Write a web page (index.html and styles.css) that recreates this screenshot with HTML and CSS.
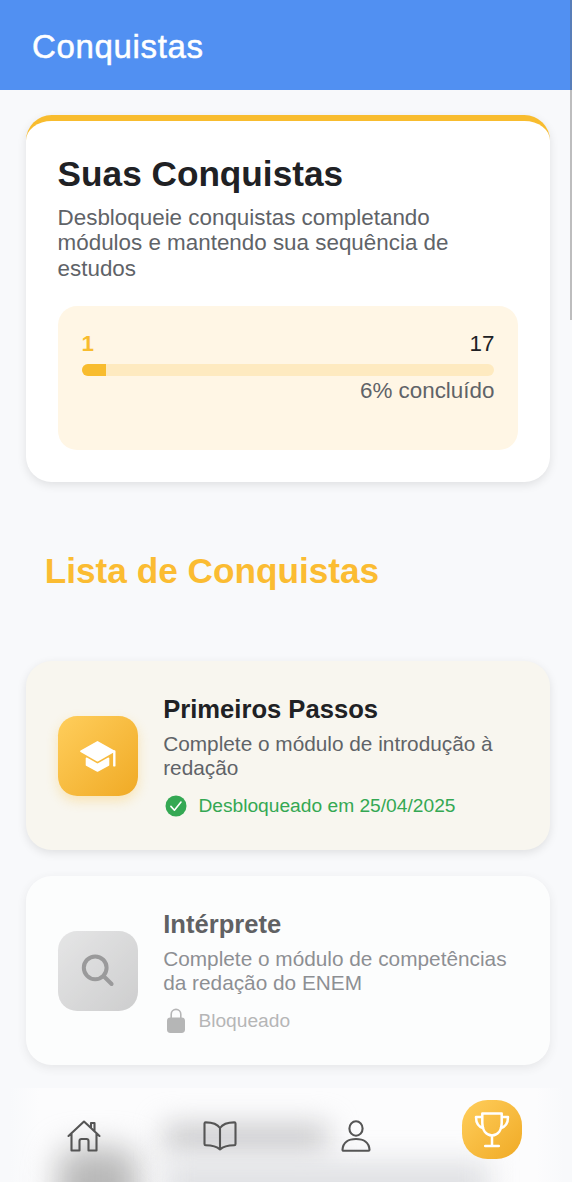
FILE: index.html
```html
<!DOCTYPE html>
<html lang="pt-BR">
<head>
    <meta charset="UTF-8">
    <meta name="viewport" content="width=device-width, initial-scale=1.0">
    <title>Conquistas</title>
    <link rel="stylesheet" href="styles.css">
</head>
<body>
    <header class="header">
        <h1>Conquistas</h1>
    </header>

    <main class="content">
        <section class="summary">
            <h2>Suas Conquistas</h2>
            <p class="summary-text">Desbloqueie conquistas completando módulos e mantendo sua sequência de estudos</p>
            <div class="progress-box">
                <div class="progress-numbers">
                    <span class="current">1</span>
                    <span>17</span>
                </div>
                <div class="progress-bar">
                    <div class="progress-fill" style="width: 5.88%"></div>
                </div>
                <div class="progress-label">6% concluído</div>
            </div>
        </section>

        <h2 class="list-title">Lista de Conquistas</h2>

        <div class="list">
            <article class="card unlocked">
                <div class="card-icon">
                    <svg width="38" height="38" viewBox="0 0 38 38" fill="#fff" stroke="#fff" stroke-linejoin="round" stroke-linecap="round">
                        <path d="M2 14.2 18.5 5 35 14.2 18.5 23.6Z" stroke-width="1.8"/>
                        <path d="M7.5 21.3 18.5 27.5 29.5 21.3V28L18.5 34 7.5 28Z" stroke-width="1.6"/>
                        <path d="M35.3 14.5V28.4" fill="none" stroke-width="2.4"/>
                    </svg>
                </div>
                <div class="card-info">
                    <h3>Primeiros Passos</h3>
                    <p>Complete o módulo de introdução à redação</p>
                    <div class="status">
                        <svg width="26" height="26" viewBox="0 0 26 26">
                            <circle cx="13" cy="13" r="10.5" fill="#34a853"/>
                            <path d="m7.9 13.4 3.5 3.8L18 9" fill="none" stroke="#fff" stroke-width="1.6" stroke-linecap="round" stroke-linejoin="round"/>
                        </svg>
                        <span>Desbloqueado em 25/04/2025</span>
                    </div>
                </div>
            </article>

            <article class="card locked">
                <div class="card-icon">
                    <svg width="38" height="38" viewBox="0 0 38 38" fill="none" stroke="#737373" stroke-width="4" stroke-linecap="round">
                        <circle cx="16.2" cy="15.8" r="11.4"/>
                        <path d="m25 24.5 7.6 7.5"/>
                    </svg>
                </div>
                <div class="card-info">
                    <h3>Intérprete</h3>
                    <p>Complete o módulo de competências da redação do ENEM</p>
                    <div class="status">
                        <svg width="26" height="26" viewBox="0 0 26 26">
                            <rect x="4" y="9.5" width="18" height="15.5" rx="3.4" fill="#9a9a9a"/>
                            <path d="M8.2 10V6.2a4.8 4.8 0 0 1 9.6 0V10" fill="none" stroke="#9a9a9a" stroke-width="1.6"/>
                        </svg>
                        <span>Bloqueado</span>
                    </div>
                </div>
            </article>
        </div>
    </main>

    <nav class="bottom-nav">
        <!-- blurred card passing behind the menu -->
        <div class="nav-blur">
            <div class="blur-icon"></div>
            <div class="blur-text">
                <div class="blur-title"></div>
                <div class="blur-line"></div>
            </div>
        </div>
        <a href="#" class="nav-item">
            <svg width="36" height="36" viewBox="0 0 36 36">
                <path d="M2.5 18 18 3.5l15.5 14.5M5.500 15.500v17h8V23c0-1.200.8-2 2-2h5c1.200 0 2 .8 2 2v9.500h8v-17M25 10V5h3.500v8"/>
            </svg>
        </a>
        <a href="#" class="nav-item">
            <svg width="36" height="36" viewBox="0 0 36 36">
                <path d="M18 10C15.500 6.300 9.500 4.400 3.700 4.400q-1.200 0-1.200 1.200v20.400q0 1.200 1.200 1.200c6 0 10.800.8 14.300 4.300 3.500-3.500 8.300-4.300 14.300-4.300q1.200 0 1.200-1.200V5.600q0-1.200-1.200-1.200C26.500 4.400 20.500 6.300 18 10V31.500"/>
            </svg>
        </a>
        <a href="#" class="nav-item">
            <svg width="36" height="36" viewBox="0 0 36 36">
                <ellipse cx="18" cy="10.5" rx="6.6" ry="7.2"/>
                <path d="M4.500 31.700C5 24.500 10.500 21 18 21s13 3.500 13.500 10.700q0 1-1 1H5.500q-1 0-1-1Z"/>
            </svg>
        </a>
        <a href="#" class="nav-item active">
            <svg width="38" height="38" viewBox="0 0 38 38">
                <path d="M9.300 2.500h19.400v9.500c0 7-3.500 12-9.700 12.500C12.800 24 9.300 19 9.300 12ZM19 24.500V35M12.200 35h13.600M9.300 6H3c0 5.500 2.200 9.700 7.300 11.200M28.700 6H35c0 5.500-2.200 9.700-7.300 11.200"/>
            </svg>
        </a>
    </nav>

    <div class="scroll-thumb"></div>
</body>
</html>
```

FILE: styles.css
```css
* {
    box-sizing: border-box;
}

body {
    margin: 0;
    height: 1182px;
    background-color: #f8f9fb;
    color: #202124;
    font-family: "Liberation Sans", Arial, sans-serif;
    font-size: 22.4px;
    line-height: 25.6px;
}

h1, h2, h3, p {
    margin: 0;
}

.header {
    height: 89.6px;
    padding: 0 32px;
    display: flex;
    align-items: center;
    background-color: #5190f2;
    color: #fff;
}

.header h1 {
    font-size: 33px;
    font-weight: normal;
    letter-spacing: 0.65px;
    line-height: 38px;
    margin-top: 4px;
    -webkit-text-stroke: 0.5px #fff;
}

.content {
    padding: 25.9px 21.6px 0 25.6px;
}

.summary {
    height: 366.9px;
    padding: 32px;
    border-top: 6.4px solid #f8bc2e;
    border-radius: 25.6px;
    background-color: #fff;
    box-shadow: 0 3px 10px rgba(0, 0, 0, 0.1);
}

.summary h2 {
    font-size: 35.2px;
    line-height: 41px;
}

.summary-text {
    margin-top: 10.4px;
    color: #5f6368;
}

.progress-box {
    height: 144px;
    margin-top: 24.4px;
    padding: 24px;
    border-radius: 19.2px;
    background-color: #fff6e5;
}

.progress-numbers {
    display: flex;
    justify-content: space-between;
    margin-top: 0.6px;
}

.current {
    color: #f8bc2e;
    font-weight: bold;
}

.progress-bar {
    height: 12.8px;
    margin-top: 7.4px;
    border-radius: 6.4px;
    background-color: #feeac0;
    overflow: hidden;
}

.progress-fill {
    height: 100%;
    background-color: #f8bc2e;
}

.progress-label {
    margin-top: 1.8px;
    text-align: right;
    color: #5f6368;
}

.list-title {
    padding-left: 19.2px;
    margin: 67.6px 0 70.2px;
    color: #fbbc32;
    font-size: 35.2px;
    line-height: 41px;
}

.list {
    display: flex;
    flex-direction: column;
    gap: 25.6px;
}

.card {
    display: flex;
    align-items: center;
    gap: 25.6px;
    height: 189.2px;
    padding: 32px;
    border-radius: 25.6px;
    background-color: #fff;
    box-shadow: 0 3px 10px rgba(0, 0, 0, 0.1);
}

.card.unlocked {
    background-color: #f8f6ef;
}

.card.locked {
    opacity: 0.7;
}

.card-icon {
    width: 80px;
    height: 80px;
    flex-shrink: 0;
    display: flex;
    align-items: center;
    justify-content: center;
    border-radius: 19.2px;
    background: linear-gradient(135deg, #ffce5c, #f0aa25);
    box-shadow: 0 5px 12px rgba(251, 188, 50, 0.3);
}

.locked .card-icon {
    background: linear-gradient(135deg, #dedede, #bcbcbc);
    box-shadow: none;
}

.card-info {
    flex: 1;
    padding-top: 1.4px;
}

.card h3 {
    font-size: 25.6px;
    line-height: 30px;
}

.card p {
    margin-top: 8px;
    color: #5f6368;
    font-size: 20.8px;
    line-height: 24px;
}

.status {
    display: flex;
    align-items: center;
    gap: 9.2px;
    margin-top: 13.2px;
    color: #34a853;
    font-size: 19.2px;
    line-height: 26px;
}

.locked .status {
    color: #9a9a9a;
}

.bottom-nav {
    position: fixed;
    left: 0;
    right: 0;
    bottom: 0;
    height: 94px;
    padding: 2px 12px 0 16px;
    display: grid;
    grid-template-columns: repeat(4, 1fr);
    align-items: center;
}

.nav-blur {
    position: absolute;
    inset: 0;
    z-index: -1;
    display: flex;
    gap: 26px;
    padding: 0 58px;
    overflow: hidden;
    background: linear-gradient(90deg, #f8f9fb 10px, #fcfcfd 40px, #fcfcfd 536px, #f8f9fb 564px);
}

.blur-icon {
    width: 80px;
    height: 80px;
    margin-top: 60px;
    flex-shrink: 0;
    border-radius: 19.2px;
    background-color: #b8b8b8;
    filter: blur(16px);
}

.blur-text {
    padding-top: 36px;
}

.blur-title {
    width: 164px;
    height: 28px;
    background-color: #c9c9cb;
    filter: blur(14px);
}

.blur-line {
    width: 325px;
    height: 48px;
    margin-top: 9px;
    background-color: #e0e1e4;
    filter: blur(14px);
}

.nav-item {
    display: flex;
    justify-content: center;
    justify-self: center;
    align-items: center;
}

.nav-item svg {
    fill: none;
    stroke: #555;
    stroke-width: 2.1;
    stroke-linecap: round;
    stroke-linejoin: round;
}

.nav-item.active {
    width: 59.2px;
    height: 59.2px;
    margin-bottom: 13px;
    border-radius: 25.6px;
    background: linear-gradient(135deg, #ffce5c, #f0aa25);
}

.nav-item.active svg {
    stroke: #fff;
    stroke-width: 2.5;
}

.scroll-thumb {
    position: fixed;
    top: 0;
    right: 0;
    width: 2.4px;
    height: 320px;
    background-color: rgba(100, 100, 100, 0.4);
}
```
